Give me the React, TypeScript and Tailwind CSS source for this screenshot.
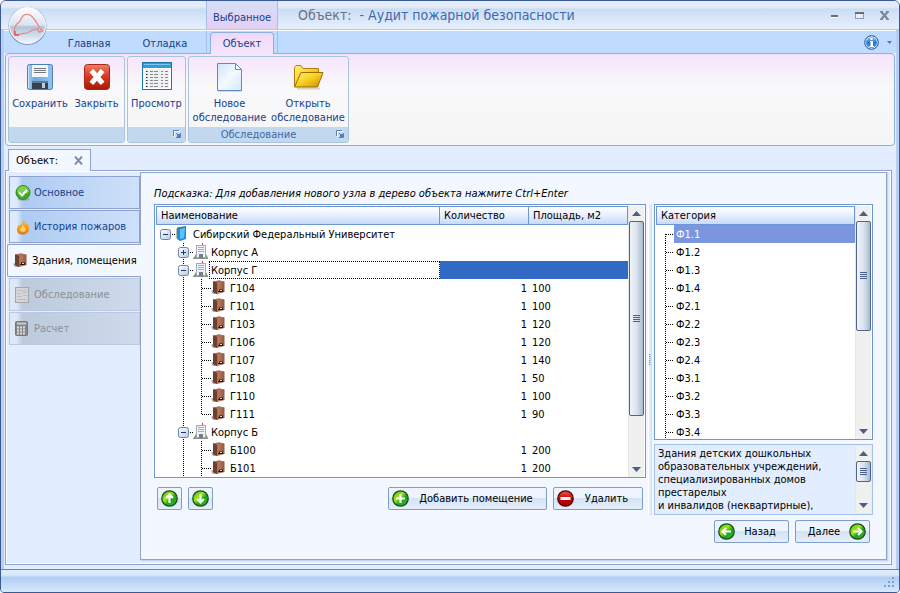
import clsx from "clsx";
import type { ReactNode } from "react";

type TreeRow = {
	name: string;
	level: 0 | 1 | 2;
	open?: boolean;
	last?: boolean;
	selected?: boolean;
	count?: number;
	area?: number;
};

const treeRows: TreeRow[] = [
	{ name: "Сибирский Федеральный Университет", level: 0, open: true },
	{ name: "Корпус А", level: 1, open: false },
	{ name: "Корпус Г", level: 1, open: true, selected: true },
	{ name: "Г104", level: 2, count: 1, area: 100 },
	{ name: "Г101", level: 2, count: 1, area: 100 },
	{ name: "Г103", level: 2, count: 1, area: 120 },
	{ name: "Г106", level: 2, count: 1, area: 120 },
	{ name: "Г107", level: 2, count: 1, area: 140 },
	{ name: "Г108", level: 2, count: 1, area: 50 },
	{ name: "Г110", level: 2, count: 1, area: 100 },
	{ name: "Г111", level: 2, count: 1, area: 90, last: true },
	{ name: "Корпус Б", level: 1, open: true },
	{ name: "Б100", level: 2, count: 1, area: 200 },
	{ name: "Б101", level: 2, count: 1, area: 200 },
];

const categories = [
	"Ф1.1",
	"Ф1.2",
	"Ф1.3",
	"Ф1.4",
	"Ф2.1",
	"Ф2.2",
	"Ф2.3",
	"Ф2.4",
	"Ф3.1",
	"Ф3.2",
	"Ф3.3",
	"Ф3.4",
];

const description = `Здания детских дошкольных
образовательных учреждений,
специализированных домов
престарелых
и инвалидов (неквартирные),`;

/* Shared gradients, referenced by id from every icon */
function Gradients() {
	return (
		<svg width="0" height="0" className="absolute" aria-hidden="true">
			<defs>
				<linearGradient id="green" x1="0" y1="0" x2="1" y2="1">
					<stop offset="0" stopColor="#4fb81c" />
					<stop offset="0.4" stopColor="#9be614" />
					<stop offset="0.6" stopColor="#1fa01c" />
					<stop offset="1" stopColor="#3fc52a" />
				</linearGradient>
				<linearGradient id="red" x1="0" y1="0" x2="0" y2="1">
					<stop offset="0" stopColor="#f08068" />
					<stop offset="0.45" stopColor="#dc3a20" />
					<stop offset="1" stopColor="#a81808" />
				</linearGradient>
				<linearGradient id="stop" x1="0" y1="0" x2="0" y2="1">
					<stop offset="0" stopColor="#e85a50" />
					<stop offset="0.5" stopColor="#d00000" />
					<stop offset="1" stopColor="#a00000" />
				</linearGradient>
				<linearGradient id="disk" x1="0" y1="0" x2="1" y2="0">
					<stop offset="0" stopColor="#a9cef0" />
					<stop offset="0.3" stopColor="#6ca8e0" />
					<stop offset="1" stopColor="#96c3ec" />
				</linearGradient>
				<linearGradient id="page" x1="0" y1="0" x2="1" y2="1">
					<stop offset="0" stopColor="#cfe3f7" />
					<stop offset="0.5" stopColor="#f4f9ff" />
					<stop offset="1" stopColor="#d3e9fd" />
				</linearGradient>
				<linearGradient id="folder" x1="0" y1="0" x2="1" y2="1">
					<stop offset="0" stopColor="#fff27a" />
					<stop offset="0.5" stopColor="#f5cf1c" />
					<stop offset="1" stopColor="#c98a08" />
				</linearGradient>
				<linearGradient id="orb" x1="0" y1="0" x2="0" y2="1">
					<stop offset="0" stopColor="#ffffff" />
					<stop offset="0.48" stopColor="#dde4ee" />
					<stop offset="0.54" stopColor="#b3c3d8" />
					<stop offset="1" stopColor="#f0f8ff" />
				</linearGradient>
				<linearGradient id="wood" x1="0" y1="0" x2="1" y2="0">
					<stop offset="0" stopColor="#86503a" />
					<stop offset="0.5" stopColor="#b5795c" />
					<stop offset="1" stopColor="#93573f" />
				</linearGradient>
				<linearGradient id="flame" x1="0" y1="0" x2="0" y2="1">
					<stop offset="0" stopColor="#f9b53c" />
					<stop offset="0.6" stopColor="#f39a1e" />
					<stop offset="1" stopColor="#dd7a12" />
				</linearGradient>
				<linearGradient id="info" x1="0" y1="0" x2="0" y2="1">
					<stop offset="0" stopColor="#8cc4f4" />
					<stop offset="0.5" stopColor="#2a74cc" />
					<stop offset="1" stopColor="#3f9af0" />
				</linearGradient>
				<linearGradient id="expander" x1="0" y1="0" x2="1" y2="1">
					<stop offset="0" stopColor="#ffffff" />
					<stop offset="1" stopColor="#b9c9e0" />
				</linearGradient>
			</defs>
		</svg>
	);
}

function AppOrb() {
	return (
		<svg width="40" height="40" viewBox="0 0 40 40">
			<circle cx="20.500" cy="21" r="19" fill="#7d93b4" />
			<circle cx="20.500" cy="20.500" r="18" fill="url(#orb)" stroke="#f7fbff" />
			<path
				d="M7 29c0-6 2-10 5-12 2-1 2-5 5-7 5-2 8 1 10 4 4 4 5 10 9 12M7 29l4 1c2-2 6-1 9-2 4-2 7-5 12-4M30 24l2 3 4-1"
				fill="none"
				stroke="#e8868c"
				strokeWidth="1.300"
			/>
			<path d="M8 26v4h4" fill="none" stroke="#e05560" strokeWidth="1.500" />
		</svg>
	);
}

function SaveIcon() {
	return (
		<svg width="32" height="32" viewBox="0 0 32 32">
			<rect x="3.500" y="3.500" width="25" height="25" rx="2" fill="url(#disk)" stroke="#4c7eb8" />
			<path d="M4.500 5v22" stroke="#cfe4f8" />
			<path d="M8 4h16v12H8z" fill="#f4f6f8" />
			<path d="M10 7.500h12M10 9.500h12M10 11.500h12" stroke="#75777a" />
			<rect x="8" y="20" width="16" height="8" fill="#34414f" />
			<rect x="8" y="20" width="16" height="2" fill="#67788a" />
			<rect x="18" y="22" width="3" height="5" fill="#aed2f0" />
		</svg>
	);
}

function CloseDocIcon() {
	return (
		<svg width="32" height="32" viewBox="0 0 32 32">
			<rect x="3.500" y="3.500" width="25" height="25" rx="3" fill="url(#red)" stroke="#a82818" />
			<path d="M12 11.500l8 9M20 11.500l-8 9" stroke="#fff" strokeWidth="5" strokeLinecap="square" />
		</svg>
	);
}

function ViewIcon() {
	return (
		<svg width="32" height="32" viewBox="0 0 32 32">
			<rect x="1.500" y="1.500" width="29" height="27" fill="#fff" stroke="#1878b0" />
			<rect x="2" y="2" width="28" height="5" fill="#2f9bd8" />
			<path d="M3 3.500h26" stroke="#7cc6f0" />
			<rect x="4" y="8" width="24" height="19" fill="#f0f0f0" />
			{[10, 13, 16, 19, 22, 25].map((y) => (
				<path key={y} d={`M5 ${y}.500h2M9 ${y}.500h3M13 ${y}.500h4M20 ${y}.500h2M24 ${y}.500h3`} stroke="#828b94" />
			))}
			<path d="M5.500 10v1M5.500 13v1M5.500 16v1M5.500 19v1M5.500 22v1M5.500 25v1" stroke="#123" />
		</svg>
	);
}

function NewIcon() {
	return (
		<svg width="32" height="32" viewBox="0 0 32 32">
			<path d="M4 30.500h24" stroke="#d5d8de" />
			<path d="M3.500 2.500h18l6 6v21h-24z" fill="url(#page)" stroke="#5f8cc0" />
			<path d="M21.500 2.500v6h6z" fill="#fff" stroke="#5f8cc0" />
		</svg>
	);
}

function OpenIcon() {
	return (
		<svg width="32" height="32" viewBox="0 0 32 32">
			<path d="M5 27.500h23" stroke="#d8d4c4" strokeWidth="2" />
			<path d="M2.500 26V6.500l1.500-2h5l2 3h15.500v5" fill="url(#folder)" stroke="#b08010" />
			<path d="M2.500 26l6.500-14.500h22l-5.500 14.500z" fill="url(#folder)" stroke="#a06808" />
		</svg>
	);
}

function LauncherIcon() {
	return (
		<svg width="8" height="8" viewBox="0 0 8 8">
			<path d="M.5 6V.5H6" fill="none" stroke="#5c7fae" />
			<path d="M1.500 7V1.500H7" fill="none" stroke="#fff" />
			<path d="M3 3l2 2M7.500 3v4.500H3" fill="none" stroke="#5c7fae" />
			<rect x="4" y="4" width="3" height="3" fill="#5c7fae" />
		</svg>
	);
}

function InfoIcon() {
	return (
		<svg width="15" height="15" viewBox="0 0 15 15">
			<circle cx="7.500" cy="7.500" r="6.800" fill="#d4eafc" stroke="#1c5090" />
			<circle cx="7.500" cy="7.500" r="5.400" fill="url(#info)" />
			<path d="M6.500 3h2v2h-2zM6 6h3v5h1v1H5.500v-1h1V7H6z" fill="#fff" />
		</svg>
	);
}

type BallKind = "up" | "down" | "left" | "right" | "plus" | "minus";

const ballPaths: Record<BallKind, string> = {
	up: "M8.500 13V5M5 8l3.500-3.500L12 8",
	down: "M8.500 4v8M5 9l3.500 3.500L12 9",
	left: "M13 8.500H5M8 5L4.500 8.500L8 12",
	right: "M4 8.500h8M9 5l3.500 3.500L9 12",
	plus: "M8.500 4v9M4 8.500h9",
	minus: "M3.500 8.500h10",
};

function BallIcon({ kind }: { kind: BallKind }) {
	const isMinus = kind === "minus";
	return (
		<svg width="17" height="17" viewBox="0 0 17 17" className="shrink-0">
			<circle
				cx="8.500"
				cy="8.500"
				r="7.700"
				fill={isMinus ? "url(#stop)" : "url(#green)"}
				stroke={isMinus ? "#4a0808" : "#14501c"}
				strokeWidth="1.300"
			/>
			<path d={ballPaths[kind]} fill="none" stroke="#fff" strokeWidth={isMinus ? 3 : 2.2} />
		</svg>
	);
}

function CheckIcon() {
	return (
		<svg width="16" height="16" viewBox="0 0 16 16">
			<ellipse cx="8.500" cy="14" rx="6" ry="1.800" fill="#a3a8b4" />
			<circle cx="8" cy="7.500" r="7" fill="#3faa28" stroke="#2f8a22" />
			<path d="M2 7a6 6 0 0 1 12 0c-3 2-8 2-12 0z" fill="#7fd04c" />
			<path d="M4 7.500l3 3L12 5" fill="none" stroke="#fff" strokeWidth="2.200" />
		</svg>
	);
}

function FireIcon() {
	return (
		<svg width="16" height="16" viewBox="0 0 16 16">
			<path
				d="M8 .5c2 2 2.500 3 2 5l2-1.500c2 3 2.500 5 2 7-.5 2.500-3 4.500-6.500 4.500S2 13.500 2 11c0-2.500 1-4 2.500-6l.5 2C7 5 8 3 8 .5z"
				fill="url(#flame)"
			/>
			<path d="M7.500 6c2 2 3.500 3 3 5.500-.5 1.500-4.500 2-5.500 0C4.500 9.500 7 9 7.500 6z" fill="#fbd06a" />
		</svg>
	);
}

/* Brown cabinet, used for a single room */
function RoomShape() {
	return (
		<g>
			<path d="M0 11l3-1.500L7 14H2z" fill="#a9a9b0" />
			<path d="M2 1.500L8 .5l5.500 1v10.500L6 14l-4-2z" fill="url(#wood)" />
			<path d="M2 1.500l4 1V14l-4-2z" fill="#6e3e2e" />
			<path d="M2 1.500L8 .5l5.500 1L6 2.500z" fill="#a5715a" />
			<path d="M8 9.500h4V12H7v-1h1z" fill="#251611" />
			<path d="M9 10.500h2" stroke="#e6d6cc" />
		</g>
	);
}

function RoomIcon() {
	return (
		<svg width="14" height="15" viewBox="0 0 14 15">
			<RoomShape />
		</svg>
	);
}

function SurveyIcon() {
	return (
		<svg width="14" height="16" viewBox="0 0 14 16">
			<rect x=".5" y=".5" width="13" height="15" fill="#d5d6d8" stroke="#a5a6aa" />
			<path d="M2 3.500h10M2 6.500h4M7 5.500h5M2 9.500h5M8 8.500h4M2 12.500h10" stroke="#bdbec2" />
		</svg>
	);
}

function CalcIcon() {
	return (
		<svg width="13" height="15" viewBox="0 0 13 15">
			<rect x=".5" y=".5" width="12" height="14" rx="1" fill="#85878b" stroke="#75777b" />
			<path d="M2 2.500h9" stroke="#c9cccf" strokeWidth="2" />
			<path d="M2 6.500h9M2 9.500h9M2 12.500h9" stroke="#dcdde0" strokeWidth="2" strokeDasharray="2 1" />
		</svg>
	);
}

/* Dotted guides, the expander box and the node picture of one tree row */
function TreeLead({ row }: { row: TreeRow }) {
	const { level, open, last } = row;
	const width = [35, 53, 71][level];
	const boxX = level === 0 ? 4 : 22;
	return (
		<svg width={width} height="18" className="shrink-0" aria-hidden="true">
			<g stroke="#000" strokeDasharray="1 1" fill="none">
				{level > 0 && <path d="M27.500 0v18" />}
				{level === 0 && <path d="M16 9.500h4" />}
				{level === 1 && <path d="M34 9.500h4" />}
				{level === 2 && <path d={last ? "M45.500 0v9" : "M45.500 0v18"} />}
				{level === 2 && <path d="M46 9.500h9" />}
			</g>
			{open !== undefined && (
				<g>
					<rect x={boxX + 0.5} y="4.500" width="10" height="10" rx="2" fill="url(#expander)" stroke="#7085a5" />
					<path d={`M${boxX + 3} 9.500h5`} stroke="#223a66" />
					{!open && <path d={`M${boxX + 5.5} 7v5`} stroke="#223a66" />}
				</g>
			)}
			{level === 0 && (
				<g>
					<path d="M20 4l2-1v11l-2-1z" fill="#b9bbb4" />
					<path d="M21 3l9-1v12l-6 2-3-2z" fill="#1b8fdc" />
					<path d="M24 4l5-1-1 10-4 1z" fill="#5cc2fa" />
					<path d="M21 2.500l9-1.500v1.500l-8 1.500z" fill="#3a7d9c" />
				</g>
			)}
			{level === 1 && (
				<g>
					<path d="M46.500 0v3" stroke="#d03a3a" />
					<path d="M37.500 15l3-5 1 5M48.500 15l1-5 2.500 5z" fill="#62b04c" />
					<rect x="40.500" y="2.500" width="9" height="12" fill="#eef2f8" stroke="#a3abb8" />
					<path d="M42 4.500h6M42 6.500h6M42 8.500h6" stroke="#8fb3ea" />
					<rect x="43" y="11" width="4" height="4" fill="#767c88" />
					<path d="M37 15.500h15" stroke="#8a9096" />
				</g>
			)}
			{level === 2 && (
				<g transform="translate(55 1)">
					<RoomShape />
				</g>
			)}
		</svg>
	);
}

function Scrollbar({ thumb, label }: { thumb: string; label: string }) {
	return (
		<div className="flex w-4 shrink-0 flex-col border-l border-[#e6e6e6] bg-[#f0f0ef]">
			<button type="button" aria-label={`${label}: вверх`} className="flex h-[15px] shrink-0 items-center justify-center">
				<svg width="9" height="5" viewBox="0 0 9 5">
					<path d="M4.500 0L9 5H0z" fill="#4a5f8c" />
				</svg>
			</button>
			<div
				className={clsx(
					"flex shrink-0 items-center justify-center rounded-xs border border-[#50648f] bg-linear-to-r from-[#f0f4fa] via-[#dbe4ef] to-[#a9bbd0]",
					thumb,
				)}>
				<svg width="7" height="8" viewBox="0 0 7 8">
					<path d="M0 .5h7M0 2.500h7M0 4.500h7M0 6.500h7" stroke="#4a5f8c" />
				</svg>
			</div>
			<div className="flex-1" />
			<button type="button" aria-label={`${label}: вниз`} className="flex h-4 shrink-0 items-center justify-center">
				<svg width="9" height="5" viewBox="0 0 9 5">
					<path d="M0 0h9L4.500 5z" fill="#4a5f8c" />
				</svg>
			</button>
		</div>
	);
}

function RibbonGroup({ caption, launcher, children }: { caption?: string; launcher?: boolean; children: ReactNode }) {
	return (
		<section className="flex h-[87px] flex-col overflow-hidden rounded-[3px] border border-[#a9c5de]">
			<div className="flex flex-1 items-start px-px pt-1">{children}</div>
			<div className="relative flex h-[15px] items-center justify-center bg-[#c1d8ef] pr-5 text-[#3e6aaa]">
				{caption}
				{launcher && (
					<button type="button" aria-label="Параметры группы" className="absolute right-1 bottom-1">
						<LauncherIcon />
					</button>
				)}
			</div>
		</section>
	);
}

function RibbonButton({ icon, label, width }: { icon: ReactNode; label: string; width: string }) {
	return (
		<button type="button" className={clsx("flex flex-col items-center leading-[14px] whitespace-pre", width)}>
			{icon}
			<span className="mt-1">{label}</span>
		</button>
	);
}

function SideTab({ icon, label, state }: { icon: ReactNode; label: string; state?: "active" | "disabled" }) {
	return (
		<button
			type="button"
			role="tab"
			aria-selected={state === "active"}
			disabled={state === "disabled"}
			className={clsx(
				"flex h-[33px] items-center border whitespace-nowrap",
				!state && "ml-[3px] border-[#8ea4ce] bg-linear-to-r from-[#dfebfc] from-5% via-[#aecbf2] via-10% to-[#cfe1fa] text-[#15428b]",
				state === "active" && "relative z-10 -mr-px ml-px rounded-l-xs border-r-0 border-[#8ea4ce] bg-[#f3f7ff] text-black",
				state === "disabled" && "ml-[3px] border-[#b9c9e2] bg-linear-to-r from-[#dfe8f4] from-5% via-[#bccadc] via-10% to-[#cfdbec] text-[#8d9094]",
			)}>
			<span className="ml-[5px] flex w-[19px] shrink-0">{icon}</span>
			{label}
		</button>
	);
}

function PushButton({ icon, label, iconRight, width }: { icon: BallKind; label: string; iconRight?: boolean; width: string }) {
	return (
		<button
			type="button"
			className={clsx(
				"flex h-[23px] items-center rounded-xs border border-[#7f9dc9] bg-linear-to-b from-[#edf4fd] from-45% via-[#d3e2f5] via-50% to-[#e6effb] px-[3px] text-black",
				iconRight && "flex-row-reverse",
				width,
			)}>
			<BallIcon kind={icon} />
			<span className="flex-1 text-center">{label}</span>
		</button>
	);
}

function RoundButton({ icon, label }: { icon: BallKind; label: string }) {
	return (
		<button
			type="button"
			aria-label={label}
			className="flex h-[23px] w-[25px] items-center justify-center rounded-xs border border-[#7f9dc9] bg-linear-to-b from-[#edf4fd] from-45% via-[#d3e2f5] via-50% to-[#e6effb]">
			<BallIcon kind={icon} />
		</button>
	);
}

const headCell =
	"h-[19px] border-y border-r border-[#6d97d3] bg-linear-to-b from-white via-[#e6effd] to-[#c5dbfa] px-1 py-0 text-left font-normal";

function TitleBar() {
	return (
		<header className="flex h-[29px] items-stretch border-b border-[#a9cdf0] bg-linear-to-b from-[#e4ecf8] from-20% via-[#cbddf6] via-30% to-[#e6f0fd]">
			<div className="ml-[205px] flex w-[72px] items-center justify-center border-x border-[#a9bfe6] bg-linear-to-b from-[#d5dff6] to-[#e3cff5] pt-1 text-[#15428b]">
				Выбранное
			</div>
			<h1 className="flex-1 pl-5 text-[14px] leading-[28px] whitespace-pre text-[#3e6aaa]">
				<span className="text-[#6b7280]">Объект:</span>
				{"  - Аудит пожарной безопасности"}
			</h1>
			<div className="flex items-center gap-4 pr-2.5">
				<button type="button" aria-label="Свернуть">
					<svg width="9" height="9" viewBox="0 0 9 9">
						<path d="M1 5h7" stroke="#6b6b70" strokeWidth="2" />
						<path d="M1 6.500h7" stroke="#fff" />
					</svg>
				</button>
				<button type="button" aria-label="Развернуть">
					<svg width="9" height="9" viewBox="0 0 9 9">
						<rect x=".5" y="1.500" width="8" height="6" fill="#e6effb" stroke="#8f9db5" />
						<path d="M0 2h9" stroke="#6b6b70" strokeWidth="2" />
					</svg>
				</button>
				<button type="button" aria-label="Закрыть окно">
					<svg width="9" height="9" viewBox="0 0 9 9">
						<path d="M1 .5l7 8M8 .5l-7 8" stroke="#7d8899" strokeWidth="2.200" />
						<path d="M0 .5h3M6 .5h3M0 8.500h3M6 8.500h3" stroke="#7d8899" />
					</svg>
				</button>
			</div>
		</header>
	);
}

function Ribbon() {
	return (
		<>
			<nav className="flex h-[23px] items-end border-t border-white bg-[#bfdbff] text-[#15428b]">
				<div className="mr-[3px] ml-[47px] flex h-5 items-center">
					<button type="button" className="w-[76px]">Главная</button>
					<button type="button" className="w-[76px]">Отладка</button>
				</div>
				<div className="flex h-[22px] w-[72px] items-end justify-center border-x border-[#a3c0ea]">
					<button
						type="button"
						className="relative z-10 -mb-px h-[22px] w-16 rounded-t-[4px] border border-b-0 border-[#8cb0e4] bg-linear-to-b from-[#efd9fb] to-[#f6e4fb]">
						Объект
					</button>
				</div>
				<div className="flex h-full flex-1 items-center justify-end gap-2 pr-1">
					<button type="button" aria-label="Справка">
						<InfoIcon />
					</button>
					<button type="button" aria-label="Меню справки">
						<svg width="5" height="3" viewBox="0 0 5 3">
							<path d="M0 0h5L2.500 3z" fill="#4a78b8" />
						</svg>
					</button>
				</div>
			</nav>
			<div className="mx-px flex gap-0.5 rounded-[4px] border border-[#8cb0e4] bg-linear-to-b from-[#f6e3fc] via-[#f9f8fa] via-35% to-[#f5f5f6] p-0.5 text-[#15428b]">
				<RibbonGroup>
					<RibbonButton icon={<SaveIcon />} label="Сохранить" width="w-[60px]" />
					<RibbonButton icon={<CloseDocIcon />} label="Закрыть" width="w-[53px]" />
				</RibbonGroup>
				<RibbonGroup launcher>
					<RibbonButton icon={<ViewIcon />} label="Просмотр" width="w-[55px]" />
				</RibbonGroup>
				<RibbonGroup caption="Обследование" launcher>
					<RibbonButton icon={<NewIcon />} label={"Новое\nобследование"} width="w-[79px]" />
					<RibbonButton icon={<OpenIcon />} label={"Открыть\nобследование"} width="w-[78px]" />
				</RibbonGroup>
			</div>
		</>
	);
}

function ObjectTree() {
	return (
		<div className="flex border border-[#6d97d3] bg-white px-px pt-px">
			<table className="min-w-0 flex-1 table-fixed border-separate border-spacing-0">
				<colgroup>
					<col />
					<col className="w-[89px]" />
					<col className="w-[99px]" />
				</colgroup>
				<thead>
					<tr>
						<th className={clsx(headCell, "border-l")}>Наименование</th>
						<th className={headCell}>Количество</th>
						<th className={headCell}>Площадь, м2</th>
					</tr>
				</thead>
				<tbody>
					{treeRows.map((row) => (
						<tr key={row.name} className="h-[18px]">
							<td className="p-0">
								<div className="flex h-[18px] items-center">
									<TreeLead row={row} />
									<span
										className={clsx(
											"flex h-full flex-1 items-center pl-0.5 whitespace-nowrap",
											row.level === 2 && "pl-[3px]",
											row.selected && "outline-1 -outline-offset-1 outline-dotted outline-black",
										)}>
										{row.name}
									</span>
								</div>
							</td>
							<td className={clsx("px-0.5 py-0 text-right", row.selected && "bg-[#316ac5]")}>{row.count}</td>
							<td className={clsx("px-[3px] py-0", row.selected && "bg-[#316ac5]")}>{row.area}</td>
						</tr>
					))}
				</tbody>
			</table>
			<Scrollbar thumb="h-[195px]" label="Дерево объекта" />
		</div>
	);
}

function CategoryList() {
	return (
		<div className="flex h-[236px] overflow-hidden border border-[#6d97d3] bg-white px-px pt-px">
			<div className="flex-1">
				<table className="w-full border-separate border-spacing-0">
					<thead>
						<tr>
							<th className={clsx(headCell, "border-l")}>Категория</th>
						</tr>
					</thead>
					<tbody>
						{categories.map((name, i) => (
							<tr key={name} className="h-[18px]">
								<td className="p-0">
									<div className="flex h-[18px] items-center">
										<svg width="18" height="18" className="shrink-0" aria-hidden="true">
											<g stroke="#000" strokeDasharray="1 1">
												<path d={i === 0 ? "M9.500 9v9" : "M9.500 0v18"} />
												<path d="M10 9.500h8" />
											</g>
										</svg>
										<span className={clsx("flex h-full flex-1 items-center pl-0.5", i === 0 && "bg-[#7b96de] text-white")}>
											{name}
										</span>
									</div>
								</td>
							</tr>
						))}
					</tbody>
				</table>
			</div>
			<Scrollbar thumb="h-[110px]" label="Категории" />
		</div>
	);
}

export default function App() {
	return (
		<div className="relative flex min-h-screen flex-col overflow-hidden rounded-t-[6px] rounded-b-[4px] border border-[#3b5a91] bg-[#e2eeff] font-['DejaVu_Sans_Condensed','Noto_Sans',sans-serif] text-[11px] leading-[13px] text-black">
			<Gradients />
			<TitleBar />
			{/* The orb lies over both the title bar and the ribbon tabs */}
			<button type="button" aria-label="Меню приложения" className="absolute top-1 left-1.5 z-20">
				<AppOrb />
			</button>

			<div className="flex flex-1 flex-col border-x-[3px] border-[#b9cff0]">
				<Ribbon />

				<main className="flex flex-1 flex-col pt-[3px] pr-1 pb-1 pl-px">
					<div className="relative z-10 -mb-px ml-[3px] flex h-[22px] w-[83px] items-center justify-between border border-b-0 border-[#8ea4ce] bg-[#f3f7ff] px-[7px]">
						<span>Объект:</span>
						<button type="button" aria-label="Закрыть вкладку">
							<svg width="9" height="9" viewBox="0 0 9 9">
								<path d="M1 .5l7 8M8 .5l-7 8" stroke="#7d8fae" strokeWidth="2" />
							</svg>
						</button>
					</div>

					<div className="flex flex-1 border border-[#8ea4ce] pt-px pr-1 pb-1 shadow-[inset_0_0_0_1px_white]">
						<div role="tablist" aria-label="Разделы" className="flex w-[134px] shrink-0 flex-col gap-px pt-1">
							<SideTab icon={<CheckIcon />} label="Основное" />
							<SideTab icon={<FireIcon />} label="История пожаров" />
							<SideTab icon={<RoomIcon />} label="Здания, помещения" state="active" />
							<SideTab icon={<SurveyIcon />} label="Обследование" state="disabled" />
							<SideTab icon={<CalcIcon />} label="Расчет" state="disabled" />
						</div>

						<div className="flex min-w-0 flex-1 flex-col border border-[#8ea4ce] bg-[#f3f7ff] px-[13px] py-3.5 shadow-[1px_1px_1px_#c3d3ec]">
							<p className="mb-1 italic">Подсказка: Для добавления нового узла в дерево объекта нажмите Ctrl+Enter</p>

							<div className="flex">
								<div className="min-w-0 flex-1">
									<ObjectTree />
									<div className="flex gap-1.5 px-[3px] pt-[9px]">
										<RoundButton icon="up" label="Переместить вверх" />
										<RoundButton icon="down" label="Переместить вниз" />
										<div className="flex-1" />
										<PushButton icon="plus" label="Добавить помещение" width="w-[159px]" />
										<PushButton icon="minus" label="Удалить" width="w-[90px]" />
									</div>
								</div>

								{/* Splitter */}
								<div className="mx-0.5 flex w-1 items-center border-x border-l-white border-r-[#cfe0fa] bg-[#e2eeff]">
									<svg width="3" height="18" viewBox="0 0 3 18">
										<path d="M1 0v18" stroke="#6d97d3" strokeWidth="2" strokeDasharray="2 1" />
									</svg>
								</div>

								<div className="flex w-[219px] shrink-0 flex-col gap-1">
									<CategoryList />
									<div className="flex h-[71px] border border-[#a3c0ea] bg-[#e2eeff] p-px">
										<textarea
											readOnly
											aria-label="Описание категории"
											defaultValue={description}
											className="min-w-0 flex-1 resize-none overflow-hidden bg-transparent px-0.5 py-px whitespace-pre outline-none"
										/>
										<Scrollbar thumb="h-[21px]" label="Описание" />
									</div>
								</div>
							</div>

							<div className="mt-[5px] flex justify-end gap-1.5 pr-[3px]">
								<PushButton icon="left" label="Назад" width="w-[75px]" />
								<PushButton icon="right" label="Далее" iconRight width="w-[75px]" />
							</div>
						</div>
					</div>
				</main>
			</div>

			<footer className="flex h-[23px] items-end justify-end border-t border-[#5f86bf] bg-linear-to-b from-[#dceafb] from-20% via-[#b0cff4] via-35% to-[#d8e7fb] p-1">
				<svg width="11" height="11" viewBox="0 0 11 11" fill="#7f9dd4">
					<path d="M8 0h2v2H8zM4 4h2v2H4zM8 4h2v2H8zM0 8h2v2H0zM4 8h2v2H4zM8 8h2v2H8z" />
				</svg>
			</footer>
		</div>
	);
}
